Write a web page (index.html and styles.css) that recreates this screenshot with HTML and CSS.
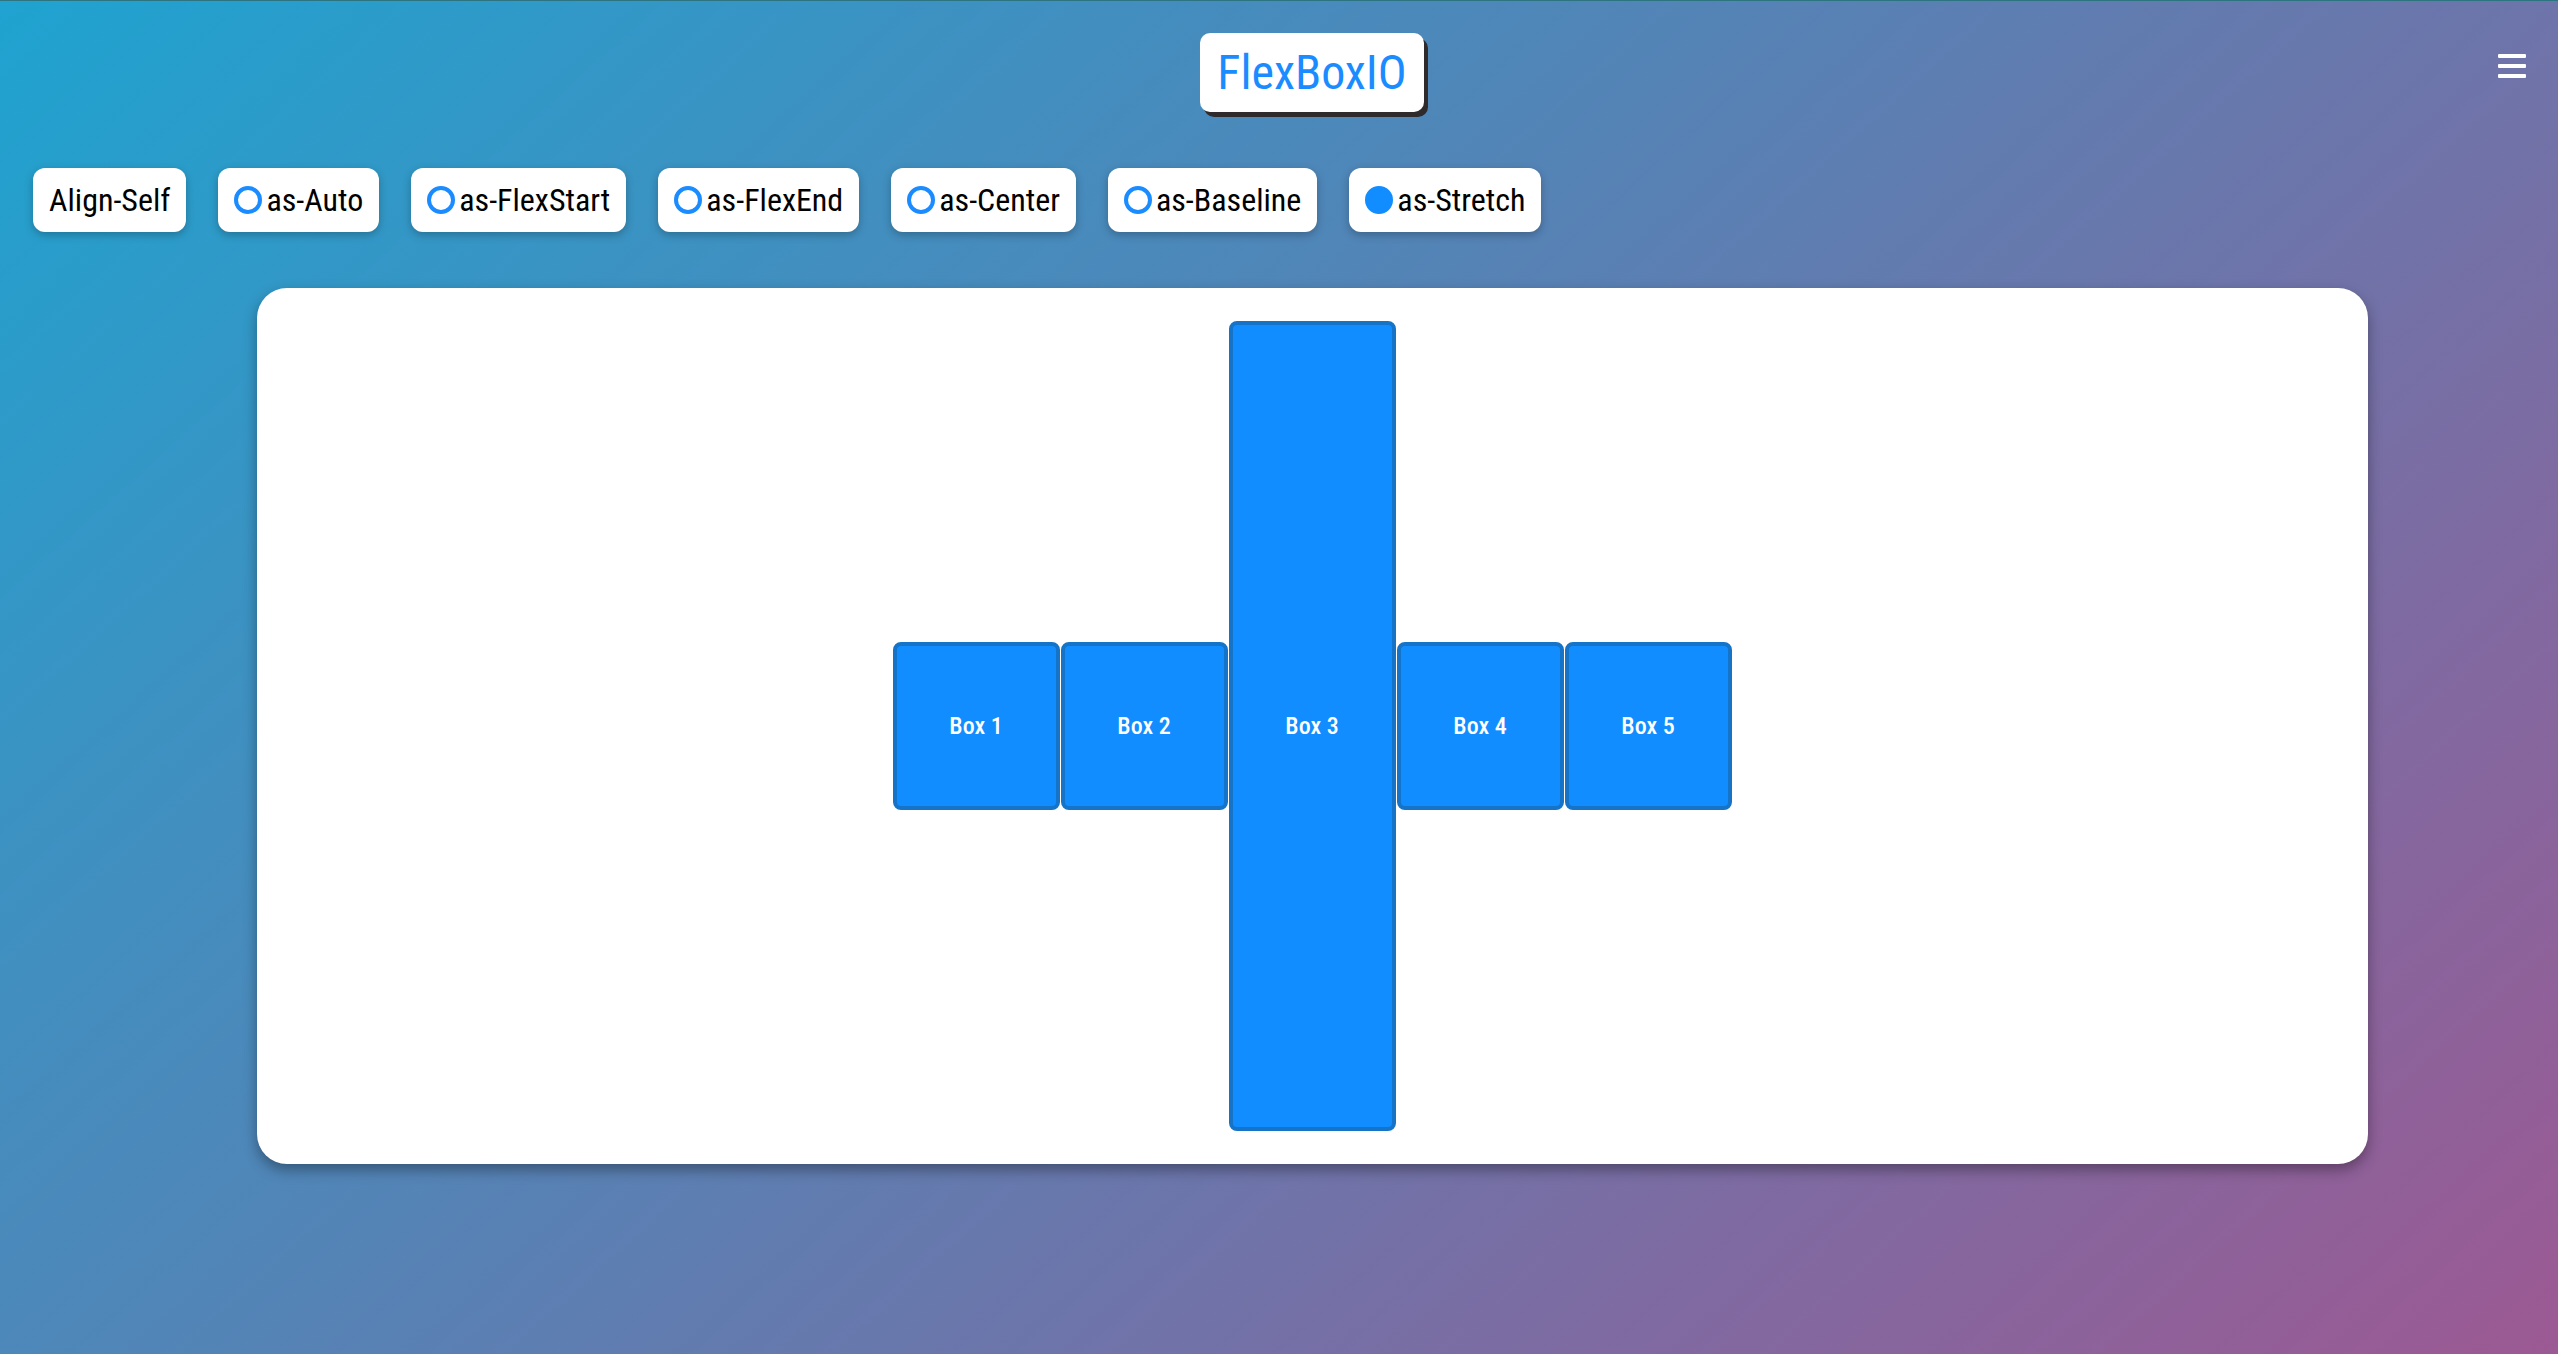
FILE: index.html
```html
<!DOCTYPE html>
<html lang="en">
<head>
<meta charset="utf-8">
<title>FlexBoxIO</title>
<link rel="stylesheet" href="styles.css">
</head>
<body>
<div class="page">
  <header class="header">
    <h1 class="logo">FlexBoxIO</h1>
    <button class="menu" aria-label="Menu">
      <span class="bar"></span><span class="bar"></span><span class="bar"></span>
    </button>
  </header>
  <nav class="controls">
    <div class="chip label">Align-Self</div>
    <label class="chip"><span class="radio"></span>as-Auto</label>
    <label class="chip"><span class="radio"></span>as-FlexStart</label>
    <label class="chip"><span class="radio"></span>as-FlexEnd</label>
    <label class="chip"><span class="radio"></span>as-Center</label>
    <label class="chip"><span class="radio"></span>as-Baseline</label>
    <label class="chip"><span class="radio checked"></span>as-Stretch</label>
  </nav>
  <main class="stage">
    <section class="card">
      <div class="box">Box 1</div>
      <div class="box">Box 2</div>
      <div class="box stretch">Box 3</div>
      <div class="box">Box 4</div>
      <div class="box">Box 5</div>
    </section>
  </main>
</div>
</body>
</html>
```
FILE: styles.css
```css
* { box-sizing: border-box; }
html, body { margin: 0; padding: 0; }
body {
  min-height: 100vh;
  font-family: "Roboto Condensed", Roboto, "Liberation Sans Narrow", sans-serif;
  font-stretch: condensed;
  background: linear-gradient(138deg, #1fa3d0 0%, #9c5993 100%);
  border-top: 1px solid #2b7480;
}
.page {
  min-height: calc(100vh - 1px);
  display: flex;
  flex-direction: column;
}
.header {
  position: relative;
  display: flex;
  justify-content: center;
  padding: 32px 0 0 66px;
}
.logo {
  margin: 0;
  height: 79px;
  padding: 0 17px;
  display: flex;
  align-items: center;
  background: #fff;
  color: #1a8cff;
  font-size: 48px;
  font-weight: 400;
  border-radius: 10px;
  box-shadow: 4px 5px 0 #2f2a2b;
}
.menu {
  position: absolute;
  top: 53px;
  right: 32px;
  width: 28px;
  padding: 0;
  border: 0;
  background: transparent;
  display: flex;
  flex-direction: column;
  gap: 6px;
}
.bar {
  display: block;
  height: 4px;
  width: 28px;
  background: #fff;
  border-radius: 1px;
}
.controls {
  display: flex;
  gap: 32px;
  padding: 0 0 0 33px;
  margin-top: 56px;
}
.chip {
  height: 64px;
  display: flex;
  align-items: center;
  gap: 4px;
  padding: 0 16px;
  background: #fff;
  color: #000;
  font-size: 32px;
  border-radius: 12px;
  box-shadow: 0 3px 8px rgba(0, 0, 0, 0.25);
}
.radio {
  width: 28px;
  height: 28px;
  border: 4px solid #1a8cff;
  border-radius: 50%;
  flex: none;
}
.radio.checked {
  background: #118dff;
  border-color: #118dff;
}
.stage {
  display: flex;
  justify-content: center;
  padding-left: 66px;
  margin-top: 56px;
}
.card {
  width: 2111px;
  height: 876px;
  padding: 33px 0;
  background: #fff;
  border-radius: 30px;
  box-shadow: 0 6px 14px rgba(0, 0, 0, 0.35);
  display: flex;
  justify-content: center;
  align-items: center;
  gap: 1px;
}
.box {
  width: 167px;
  height: 168px;
  background: #118dff;
  border: 4px solid #1573c8;
  border-radius: 8px;
  color: #fff;
  font-size: 24px;
  font-weight: 500;
  display: flex;
  align-items: center;
  justify-content: center;
}
.box.stretch {
  align-self: stretch;
  height: auto;
}
```
